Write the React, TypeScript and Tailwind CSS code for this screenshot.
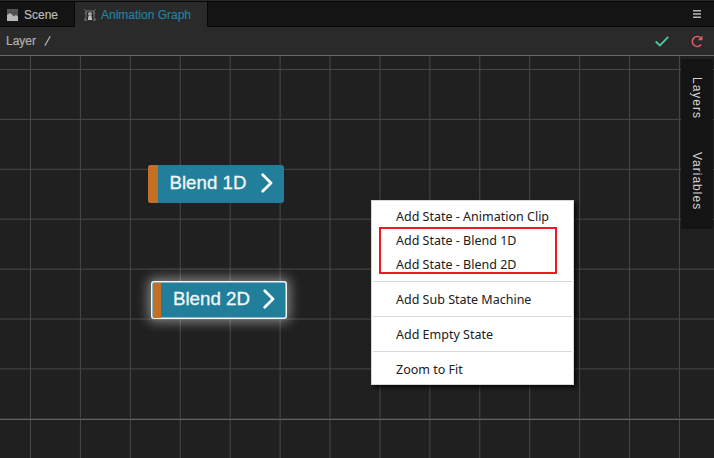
import React from "react";

const columns = Array.from({ length: 14 }, (_, i) => 30.5 + i * 49.92);
const rows = Array.from({ length: 7 }, (_, i) => 14 + i * 49.9);

function Grid() {
  return (
    <svg className="absolute inset-0 h-full w-full" aria-hidden="true">
      <g stroke="#484848" strokeWidth="1">
        {columns.map((x) => (
          <line key={x} x1={x} x2={x} y1="0" y2="403" />
        ))}
        {rows.map((y) => (
          <line key={y} x1="0" x2="714" y1={y - 0.5} y2={y - 0.5} />
        ))}
      </g>
      <line x1="0" x2="714" y1="362.5" y2="362.5" stroke="#343434" />
      <line x1="0" x2="714" y1="363.5" y2="363.5" stroke="#606060" />
    </svg>
  );
}

function Chevron() {
  return (
    <svg width="12" height="20" viewBox="0 0 12 20" fill="none" stroke="#fff" strokeWidth="2.7" strokeLinecap="round" strokeLinejoin="round">
      <path d="M1.7 1.7 10 10 1.7 18.3" />
    </svg>
  );
}

function StateNode({ label, selected = false }: { label: string; selected?: boolean }) {
  return (
    <div
      className={
        selected
          ? "absolute left-[151px] top-[225px] flex h-[38px] w-[136px] rounded-[3px] bg-[#227f9b] p-[1.5px] shadow-[inset_0_0_0_1.5px_#f4f4f4,0_0_12px_3px_rgba(255,255,255,0.45)]"
          : "absolute left-[148px] top-[109px] flex h-[38px] w-[136px] overflow-hidden rounded-[3px] bg-[#227f9b]"
      }
    >
      <div className={selected ? "w-[8.5px] shrink-0 bg-[#c46f24]" : "w-[9.5px] shrink-0 bg-[#c46f24]"} />
      <div className={selected ? "flex flex-1 items-center justify-between pb-[2px] pl-[12px] pr-[10.5px]" : "flex flex-1 items-center justify-between pb-[2px] pl-[12px] pr-[11.5px]"}>
        <span className="whitespace-nowrap text-[18.7px] leading-none text-[#f2f6f7] [-webkit-text-stroke:0.3px_#f2f6f7]">{label}</span>
        <Chevron />
      </div>
    </div>
  );
}

function MenuItem({ children }: { children: string }) {
  return <div className="flex h-6 items-center whitespace-pre pl-6 pt-[2px]">{children}</div>;
}

function Divider() {
  return <div className="mx-px my-[5px] h-px bg-[#d7d9dc]" />;
}

function SceneIcon() {
  return (
    <svg width="11" height="12" viewBox="0 0 11 12">
      <path d="M0 0h11v12H0z" fill="#555" />
      <path d="M0 6 3 4l4 3.5L9 6l2 1.5V12H0z" fill="#b8b8b8" />
      <path d="M0 3.5h11M3.5 0v4M7.5 0v5" stroke="#474747" strokeWidth=".6" />
    </svg>
  );
}

function GraphIcon() {
  return (
    <svg width="12" height="12" viewBox="0 0 12 12" fill="none">
      <path d="M.5.5 2.5 2h7l2-1.5M2 2v6L.5 11M10 2v6l1.5 3M3 2.5.8 5M9 2.5 11.2 5" stroke="#777" />
      <circle cx="6" cy="5" r="2" fill="#a5a5a5" />
      <path d="M4.5 7h3l.7 4H3.8z" fill="#c0c0c0" />
      <path d="M.5 11h2.5M9 11h2.5" stroke="#888" />
    </svg>
  );
}

export default function App() {
  return (
    <div className="flex h-[458px] w-[714px] flex-col overflow-hidden bg-[#202020] font-['Liberation_Sans',sans-serif]">
      <header className="flex h-[27px] shrink-0 border-t border-[#292929] bg-[#141414] text-[12px]">
        <div className="flex w-[75px] items-center gap-[6px] border-b border-t border-[#080808] border-r pl-[7px] pt-px text-[#b9b9b9]">
          <SceneIcon />
          <span className="[-webkit-text-stroke:0.2px_#b9b9b9]">Scene</span>
        </div>
        <div className="flex w-[132px] items-center gap-[5px] border-t border-[#080808] bg-[#2a2a2a] pl-[9px] text-[#24809b]">
          <GraphIcon />
          <span className="whitespace-nowrap [-webkit-text-stroke:0.2px_#24809b]">Animation Graph</span>
        </div>
        <div className="flex flex-1 items-center justify-end border-y border-l border-[#080808] pr-[13px]">
          <svg width="8" height="8" viewBox="0 0 8 8" stroke="#b4b4b4" strokeWidth="1.6">
            <path d="M0 .8h8M0 4h8M0 7.2h8" />
          </svg>
        </div>
      </header>
      <div className="flex h-[29px] shrink-0 items-center border-b border-[#6a6a6a] bg-[#2a2a2a] pl-[6px] pr-[11px] text-[12px] text-[#b0b0b0]">
        <span className="[-webkit-text-stroke:0.2px_#b0b0b0]">Layer</span>
        <svg className="ml-[8px]" width="7" height="10" viewBox="0 0 7 10" stroke="#b0b0b0" strokeWidth="1.3">
          <path d="M6.2 .3.8 9.7" />
        </svg>
        <svg className="ml-auto mr-[22px]" width="14" height="11" viewBox="0 0 14 11" fill="none" stroke="#50c6a0" strokeWidth="1.8">
          <path d="m.7 5.5 4.2 4L13.3.8" />
        </svg>
        <svg width="12" height="13" viewBox="0 0 12 13" fill="none" stroke="#d95b68" strokeWidth="1.6">
          <path d="M10.2 9.6A5 5 0 1 1 9.8 2.9" />
          <path d="M11.5.5v4.7H6.8z" fill="#d95b68" stroke="none" />
        </svg>
      </div>
      <main className="relative flex-1 overflow-hidden">
        <Grid />
        <StateNode label="Blend 1D" />
        <StateNode label="Blend 2D" selected />
        <aside className="absolute left-[681px] top-[3px] flex h-[170px] w-[32px] flex-col items-center bg-[#141414] pt-[18px] text-[12px] tracking-[1px] text-[#d4d4d4]">
          <span className="h-[75px] leading-[16px] [writing-mode:vertical-rl]">Layers</span>
          <span className="leading-[16px] [writing-mode:vertical-rl]">Variables</span>
        </aside>
        <div className="absolute left-[371px] top-[144px] h-[185px] w-[203px] border border-[#d4d6d9] bg-white pt-[3px] font-['Noto_Sans',sans-serif] text-[12.5px] text-[#202020] shadow-[3px_3px_4px_rgba(0,0,0,0.65)]">
          <MenuItem>Add State - Animation Clip</MenuItem>
          <MenuItem>Add State - Blend 1D</MenuItem>
          <MenuItem>Add State - Blend 2D</MenuItem>
          <Divider />
          <MenuItem>Add Sub State Machine</MenuItem>
          <Divider />
          <MenuItem>Add Empty State</MenuItem>
          <Divider />
          <MenuItem>Zoom to Fit</MenuItem>
          <div className="absolute left-[7px] top-[26px] h-[47px] w-[178px] border-2 border-[#ed1c24]" />
        </div>
      </main>
    </div>
  );
}
